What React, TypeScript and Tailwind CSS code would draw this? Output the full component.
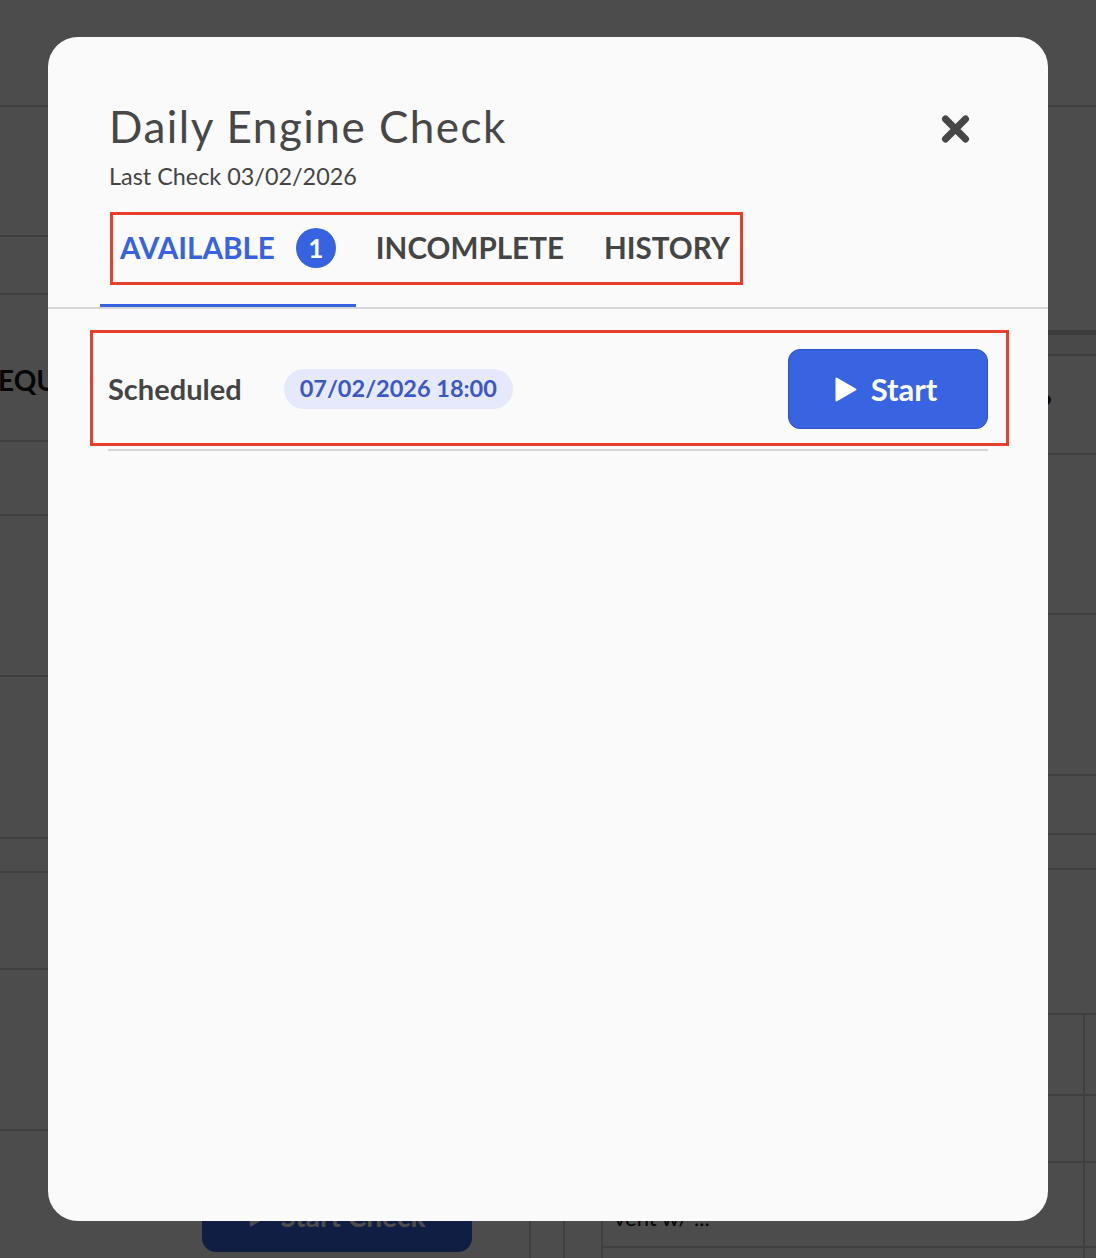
import _React from "react";

const PlayIcon = ({ className }: { className?: string }) => (
  <svg viewBox="0 0 22 25" className={className} fill="currentColor">
    <path d="M1.5 1.5 L20.5 12.5 L1.5 23.5 Z" stroke="currentColor" strokeWidth="2" strokeLinejoin="round" />
  </svg>
);

const CloseIcon = () => (
  <svg viewBox="0 0 29 28" className="h-[28px] w-[29px]">
    <path d="M4.5 4 L24.5 24 M24.5 4 L4.5 24" stroke="#464646" strokeWidth="7" strokeLinecap="round" />
  </svg>
);

// page that sits behind the dimmed overlay
const BackgroundPage = () => {
  return (
    <div className="flex h-full flex-col bg-white">
      <div className="h-[107px] shrink-0 border-b-2 border-[#d2d2d2]" />
      <div className="flex flex-1">
        {/* Left column */}
        <div className="flex w-[496px] flex-col">
          <div className="h-[130px] border-b-2 border-[#d2d2d2]" />
          <div className="h-[58px] border-b-2 border-[#d2d2d2]" />
          <div className="flex h-[147px] items-center border-b-2 border-[#d2d2d2] pt-[24px]">
            <span className="-ml-[2px] text-[28px] font-bold text-[#111]">EQUIPMENT</span>
          </div>
          <div className="h-[74px] border-b-2 border-[#d2d2d2]" />
          <div className="h-[161px] border-b-2 border-[#d2d2d2]" />
          <div className="h-[162px] border-b-2 border-[#d2d2d2]" />
          <div className="h-[34px] border-b-2 border-[#d2d2d2]" />
          <div className="h-[97px] border-b-2 border-[#d2d2d2]" />
          <div className="h-[161px] border-b-2 border-[#d2d2d2]" />
          <div className="flex-1 pl-[202px] pt-[49px]">
            <button className="flex h-[72px] w-[270px] items-center justify-center gap-3 rounded-[14px] bg-[#3864e2] text-[28px] font-bold text-white">
              <PlayIcon className="h-[22px] w-[20px]" />
              Start Check
            </button>
          </div>
        </div>
        {/* Right column */}
        <div className="flex flex-1 flex-col">
          <div className="h-[228px] border-b-[5px] border-[#c8c8c8]" />
          <div className="h-[21px] border-b-2 border-[#d2d2d2] bg-[#f4f4f4]" />
          <div className="flex h-[99px] items-center justify-end border-b-2 border-[#d2d2d2] pr-[44px]">
            <span className="text-[28px] font-bold text-[#111]">?</span>
          </div>
          <div className="h-[160px] border-b-2 border-[#d2d2d2]" />
          <div className="h-[161px] border-b-2 border-[#d2d2d2]" />
          <div className="h-[59px] border-b-2 border-[#d2d2d2]" />
          <div className="h-[35px] border-b-2 border-[#d2d2d2]" />
          <div className="h-[145px] border-b-2 border-[#d2d2d2]" />
          <div className="grid h-[81px] grid-cols-[35px_34px_38px_482px_1fr] border-b-2 border-[#d2d2d2]">
            <div className="border-r-2 border-[#d2d2d2]" />
            <div className="border-r-2 border-[#d2d2d2]" />
            <div className="border-r-2 border-[#d2d2d2]" />
            <div className="border-r-2 border-[#d2d2d2]" />
            <div />
          </div>
          <div className="grid h-[67px] grid-cols-[35px_34px_38px_482px_1fr] border-b-2 border-[#d2d2d2]">
            <div className="border-r-2 border-[#d2d2d2]" />
            <div className="border-r-2 border-[#d2d2d2]" />
            <div className="border-r-2 border-[#d2d2d2]" />
            <div className="border-r-2 border-[#d2d2d2]" />
            <div />
          </div>
          <div className="grid h-[85px] grid-cols-[35px_34px_38px_482px_1fr]">
            <div className="border-r-2 border-[#d2d2d2]" />
            <div className="border-r-2 border-[#d2d2d2]" />
            <div className="border-r-2 border-[#d2d2d2]" />
            <div className="flex items-end border-b-2 border-r-2 border-[#d2d2d2] pb-[12px] pl-[11px] text-[22px] text-[#111]">
              vent w/ ...
            </div>
            <div className="border-b-2 border-[#d2d2d2]" />
          </div>
          <div className="grid flex-1 grid-cols-[35px_34px_38px_482px_1fr]">
            <div className="border-r-2 border-[#d2d2d2]" />
            <div className="border-r-2 border-[#d2d2d2]" />
            <div className="border-r-2 border-[#d2d2d2]" />
            <div className="border-r-2 border-[#d2d2d2]" />
            <div />
          </div>
        </div>
      </div>
    </div>
  );
};

const App = () => {
  return (
    <div className="relative h-[1258px] w-full overflow-hidden font-['Lato',sans-serif]">
      <BackgroundPage />
      {/* Dim overlay */}
      <div className="absolute inset-0 bg-black/70" />

      {/* Modal */}
      <div className="absolute left-[48px] top-[37px] h-[1184px] w-[1000px] rounded-[30px] bg-[#fafafa]">
        {/* Header */}
        <div className="flex items-start justify-between pl-[61px] pr-[78px] pt-[63px]">
          <div>
            <h1 className="text-[44px] leading-[52px] tracking-[1.5px] text-[#474747]">Daily Engine Check</h1>
            <p className="mt-[10px] text-[23.4px] leading-[28px] text-[#444]">Last Check 03/02/2026</p>
          </div>
          <button className="mt-[15px]">
            <CloseIcon />
          </button>
        </div>

        {/* Tabs */}
        <div className="mt-[38px] border-b-2 border-[#d6d6d6]">
          <div className="ml-[52px] flex">
            <div className="flex items-center gap-[21px] border-b-[3px] border-[#3763e0] px-5 pb-[36px]">
              <span className="text-[29.6px] font-bold leading-[40px] text-[#3763e0]">AVAILABLE</span>
              <span className="flex size-[40px] items-center justify-center rounded-full bg-[#3763e0] text-[26px] font-bold text-white">
                1
              </span>
            </div>
            <div className="flex items-center border-b-[3px] border-transparent px-5 pb-[36px]">
              <span className="text-[29.6px] font-bold leading-[40px] text-[#454545]">INCOMPLETE</span>
            </div>
            <div className="flex items-center border-b-[3px] border-transparent px-5 pb-[36px]">
              <span className="text-[29.6px] font-bold leading-[40px] text-[#454545]">HISTORY</span>
            </div>
          </div>
        </div>

        {/* Scheduled row */}
        <div className="mx-[60px] mt-[20px] flex items-center justify-between border-b-2 border-[#d4d4d4] py-[20px]">
          <div className="flex items-center gap-[42px]">
            <span className="text-[29px] font-bold text-[#444]">Scheduled</span>
            <span className="flex h-[40px] items-center rounded-full bg-[#e5e9fb] px-4 text-[23.5px] font-bold text-[#3b58c4]">
              07/02/2026 18:00
            </span>
          </div>
          <button className="flex h-[80px] w-[200px] items-center justify-center gap-[14px] rounded-[12px] border border-[#2b51c2] bg-[#3864e2] pr-[4px] text-[31px] font-bold text-white">
            <PlayIcon className="h-[25px] w-[22px]" />
            Start
          </button>
        </div>

        {/* Annotation boxes */}
        <div className="absolute left-[62px] top-[175px] h-[73px] w-[633px] border-[3px] border-[#e4402b]" />
        <div className="absolute left-[42px] top-[293px] h-[116px] w-[919px] border-[3px] border-[#e4402b]" />
      </div>
    </div>
  );
};

export default App;
